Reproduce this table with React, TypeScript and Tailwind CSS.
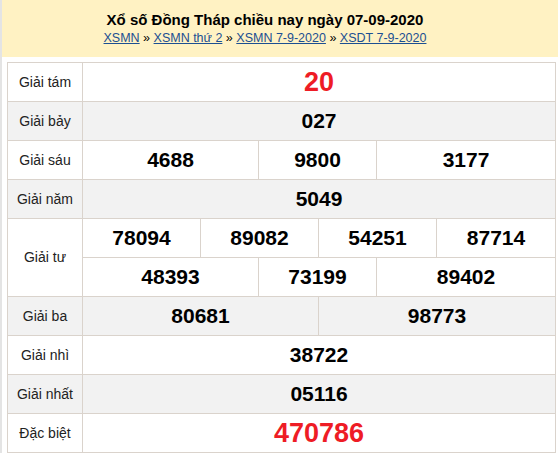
import React from "react";

const rows: { label: string; cells: string[][]; widths: number[][]; red?: boolean; alt?: boolean }[] = [
  { label: "Giải tám", cells: [["20"]], widths: [[473]], red: true },
  { label: "Giải bảy", cells: [["027"]], widths: [[473]], alt: true },
  { label: "Giải sáu", cells: [["4688", "9800", "3177"]], widths: [[176, 118, 179]] },
  { label: "Giải năm", cells: [["5049"]], widths: [[473]], alt: true },
  {
    label: "Giải tư",
    cells: [
      ["78094", "89082", "54251", "87714"],
      ["48393", "73199", "89402"],
    ],
    widths: [
      [118, 118, 118, 119],
      [176, 118, 179],
    ],
  },
  { label: "Giải ba", cells: [["80681", "98773"]], widths: [[236, 237]], alt: true },
  { label: "Giải nhì", cells: [["38722"]], widths: [[473]] },
  { label: "Giải nhất", cells: [["05116"]], widths: [[473]], alt: true },
  { label: "Đặc biệt", cells: [["470786"]], widths: [[473]], red: true },
];

export default function App() {
  return (
    <div className="min-h-screen bg-white border-l-2 border-[#e4e4e4] font-['Liberation_Sans',Arial,sans-serif]">
      <div className="h-[57px] bg-[#fff2c3] flex flex-col items-center pt-[10px] pr-[30px]">
        <h1 className="text-[15px] font-bold text-black leading-[20px]">
          Xổ số Đồng Tháp chiều nay ngày 07-09-2020
        </h1>
        <div className="text-[12.5px] leading-[17px] text-black">
          <a className="text-[#1c4f92] underline" href="#">XSMN</a> »{" "}
          <a className="text-[#1c4f92] underline" href="#">XSMN thứ 2</a> »{" "}
          <a className="text-[#1c4f92] underline" href="#">XSMN 7-9-2020</a> »{" "}
          <a className="text-[#1c4f92] underline" href="#">XSDT 7-9-2020</a>
        </div>
      </div>

      <div className="pt-[5px] pl-[5px]">
        <div className="w-[549px] border-l border-t border-[#dad3cc]">
          {rows.map((row) => (
            <div key={row.label} className={`flex ${row.alt ? "bg-[#f2f2f2]" : "bg-white"}`}>
              <div className="w-[75px] shrink-0 border-r border-b border-[#dad3cc] flex items-center justify-center text-[14px] text-[#222]">
                {row.label}
              </div>
              <div className="flex flex-col">
                {row.cells.map((line, li) => (
                  <div key={li} className="flex">
                    {line.map((num, ci) => (
                      <div
                        key={num}
                        style={{ width: row.widths[li][ci] }}
                        className={`h-[39px] border-r border-b border-[#dad3cc] flex items-center justify-center font-bold ${
                          row.red ? "text-[27px] text-[#ee1c25]" : "text-[21px] text-black"
                        }`}
                      >
                        {num}
                      </div>
                    ))}
                  </div>
                ))}
              </div>
            </div>
          ))}
        </div>
      </div>
    </div>
  );
}
